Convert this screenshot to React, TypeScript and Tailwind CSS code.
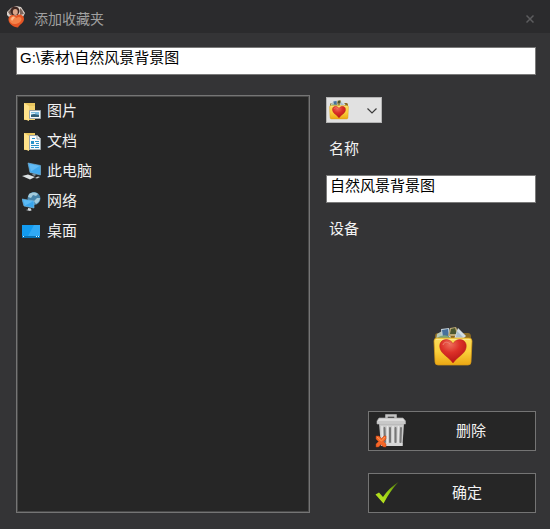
import { useState } from "react";
import type { ReactNode } from "react";

const FIELD_CLASS =
  "block h-7 w-full border border-[#7a7a7a] bg-white px-[3px] pb-[9px] text-[15px] leading-5 text-black outline-none";
const BUTTON_CLASS =
  "flex h-10 w-full items-center border border-[#747474] bg-[#262626] pl-1.5 text-[15px] leading-5 text-[#f2f2f2]";

function AppLogo() {
  return (
    <svg viewBox="0 0 20 22" className="h-[22px] w-5" aria-hidden>
      <path d="M1 6 5 2 10 0 15 1 19 7 17 11 5 13 1 9Z" fill="#dcd3cc" />
      <path d="M2 6 5 3 7 9 4 9ZM14 2 16 4 18 8 14 9Z" fill="#7d665c" />
      <circle cx="9" cy="5" r="4.500" fill="#402722" />
      <ellipse cx="9.300" cy="6" rx="2.500" ry="3" fill="#dba488" />
      <path d="M10 10C13 7 18 9 18 13c0 4-4 5-6 8.500C7 21 3 18 2.500 14 2 9 7 8 10 10Z" fill="#e65524" />
      <path d="M3.500 14c1-5 5-4 7-2 2-2 5-1 5 1 0 3-4 5-7 5-3 0-5-2-5-4Z" fill="#f58349" />
      <path d="M5 13c1-3 3-3 4-2l-3 4Z" fill="#ffb98c" />
    </svg>
  );
}

function FolderBase() {
  return (
    <>
      <path d="M2 2h11v17H2z" fill="#e9c65f" />
      <path d="M2 2l5 3v15l-5-2z" fill="#ffe28a" />
      <path d="M7 5h6v14H7z" fill="#f3d36f" />
    </>
  );
}

function PicturesIcon() {
  return (
    <svg viewBox="0 0 20 20" className="size-5" aria-hidden>
      <FolderBase />
      <path d="M7.500 9.500h11v8h-11z" fill="#f7fafb" stroke="#9aa5aa" />
      <path d="M9 11h8v5H9z" fill="#7bbbe0" />
      <path d="M9 14l3-1 5 1v2H9z" fill="#315f77" />
      <path d="M9 12h4v1H9z" fill="#d9eef7" />
    </svg>
  );
}

function DocumentsIcon() {
  return (
    <svg viewBox="0 0 20 20" className="size-5" aria-hidden>
      <FolderBase />
      <path d="M7.500 4.500h8l3 3v11h-11z" fill="#f8fbfc" stroke="#9aa5aa" />
      <path d="M15 5v3h3" fill="none" stroke="#9aa5aa" />
      <path d="M10 7h3v1h-3zM9 10h3v3H9zM13 10h4v1h-4zM14 12h3v1h-3zM9 14h8v1H9zM9 16h3v1H9zM13 16h4v1h-4z" fill="#2792c9" />
    </svg>
  );
}

function ComputerIcon() {
  return (
    <svg viewBox="0 0 20 20" className="size-5" aria-hidden>
      <path d="M6 2 18.500 4.500v9.500L8 11.500Z" fill="#41a9ee" stroke="#7fb9da" strokeWidth=".6" />
      <path d="M7 3 17.500 5 9 10.500Z" fill="#62bbf5" />
      <path d="M11 12.500l3 1-1 1.500-3-1Z" fill="#7b8e99" />
      <path d="M0 15l6-1.500 7 2.500-5 2.500Z" fill="#dce2e4" />
      <path d="M13 17l3-1.500 2 .5-3 1.500Z" fill="#cbd2d5" />
    </svg>
  );
}

function NetworkIcon() {
  return (
    <svg viewBox="0 0 20 20" className="size-5" aria-hidden>
      <circle cx="12" cy="7.500" r="6.500" fill="#4684aa" />
      <path d="M7 3c3-2 7-2 9 0l-2 2-3-1-2 3-3-1ZM15 7l3 0c0 3-2 5-4 6l-2-3Z" fill="#a3cbdc" />
      <path d="M0 8l12 2v7L2 15Z" fill="#3aa5ec" stroke="#7fc1e6" strokeWidth=".6" />
      <path d="M1 8.500l10 2L3 14.500Z" fill="#5cbaf4" />
      <path d="M6 17l3 .5v1l1 .5-2 1-4-1 2-.5Z" fill="#d4dade" />
    </svg>
  );
}

function DesktopIcon() {
  return (
    <svg viewBox="0 0 20 20" className="size-5" aria-hidden>
      <path d="M0 4h18v13H0z" fill="#129bf0" />
      <path d="M12 4h6v11H6z" fill="#30a9f5" />
      <path d="M0 15h18v2H0z" fill="#0872b4" />
      <path d="M1 15h1v1H1zM14 15h1v1h-1zM16 15h1v1h-1z" fill="#d9f1ff" />
    </svg>
  );
}

function FavoriteIcon({ className }: { className: string }) {
  return (
    <svg viewBox="0 0 40 40" className={className} aria-hidden>
      <defs>
        <linearGradient id="folder" x1="0" y1="0" x2="0" y2="1">
          <stop offset="0" stopColor="#f9dc5c" />
          <stop offset=".5" stopColor="#fbd03b" />
          <stop offset="1" stopColor="#eba714" />
        </linearGradient>
        <radialGradient id="heart" cx=".4" cy=".2" r=".8">
          <stop offset="0" stopColor="#ee6f5c" />
          <stop offset=".45" stopColor="#dc3028" />
          <stop offset="1" stopColor="#b51416" />
        </radialGradient>
      </defs>
      <path d="M2 9q0-3 3-3h30q3 0 3 4v8H2z" fill="#8a6a22" />
      <path d="M4 7l5-3 8 3v6H3z" fill="#b5c5b4" />
      <path d="M8 2l8-1 2 11H9z" fill="#c3d0da" />
      <path d="M9 3l6-1 1 8h-6z" fill="#47709b" />
      <path d="M17 1l6-1 4 9H15z" fill="#bba873" />
      <path d="M18 2l4-1 2 6h-7z" fill="#4b5730" />
      <path d="M25 1 33 9 30 12H21z" fill="#d3dee4" />
      <path d="M24 4l6 6h-7z" fill="#a9bfcc" />
      <path d="M4 11q5-4 11-2l4 3H5z" fill="#7da679" />
      <path d="M1 14q0-3 3-3h32q3 0 3 3l-1 21q0 3-3 3H5q-3 0-3-3z" fill="url(#folder)" stroke="#d99b15" strokeWidth=".7" />
      <path d="M3 12.500h34" stroke="#fbe98d" />
      <path d="M20 16.500C15 9 5 13 7 21c1 6 9 9 13 15 4-6 12-9 13-15 2-8-8-12-13-4.500Z" fill="url(#heart)" stroke="#bd1d19" strokeWidth=".5" />
      <path d="M10 18c1-3 4-4 7-1" fill="none" stroke="#ee8272" />
    </svg>
  );
}

function TrashIcon() {
  return (
    <svg viewBox="0 0 32 34" className="h-[34px] w-8" aria-hidden>
      <path d="M4 9h25l-1.500 23H6z" fill="#c9c9c9" />
      <path d="M9.500 14l.5 14M15 14v14M20.500 14v14M26 14l-.5 14" stroke="#777" strokeWidth="2" strokeLinecap="round" />
      <path d="M7 12l.5 17M12.500 12v17M18 12v17M23.500 12l-.5 17" stroke="#e6e6e6" strokeWidth="1.500" />
      <path d="M6 29h21.500v3H6z" fill="#d6d6d6" />
      <path d="M11.500 4V1.500h9V4" fill="none" stroke="#c4c4c4" strokeWidth="2.500" />
      <path d="M4 4h24l2.500 3v3H2V7z" fill="#dcdcdc" stroke="#a0a0a0" strokeWidth=".7" />
      <path d="M3 8h27" stroke="#b4b4b4" />
      <path d="M1 22h3l2.500 2.500L9 22h2v3l-2.500 2.500L11 30v3H8.500L6 30.500 3.500 33H1v-3l2.500-2.500L1 25z" fill="#f46728" stroke="#bd3e12" strokeWidth=".5" />
      <path d="M2 23l4.500 4L10 23" fill="none" stroke="#ff9a55" />
    </svg>
  );
}

function CheckIcon() {
  return (
    <svg viewBox="0 0 24 24" className="size-6" aria-hidden>
      <defs>
        <linearGradient id="check" x1="0" y1="1" x2="1" y2="0">
          <stop offset="0" stopColor="#c5ea24" />
          <stop offset=".55" stopColor="#96ce14" />
          <stop offset="1" stopColor="#456b0c" />
        </linearGradient>
      </defs>
      <path d="M.5 13.500 4 11.500 8 16Q14 7 23.500 1 15 10 8.500 22.500Z" fill="url(#check)" />
    </svg>
  );
}

const PLACES: { name: string; icon: ReactNode }[] = [
  { name: "图片", icon: <PicturesIcon /> },
  { name: "文档", icon: <DocumentsIcon /> },
  { name: "此电脑", icon: <ComputerIcon /> },
  { name: "网络", icon: <NetworkIcon /> },
  { name: "桌面", icon: <DesktopIcon /> },
];

export default function App() {
  const [path, setPath] = useState("G:\\素材\\自然风景背景图");
  const [name, setName] = useState("自然风景背景图");

  return (
    <div className="flex min-h-screen flex-col bg-[#343436] font-['Liberation_Sans','Noto_Sans_CJK_SC',sans-serif] text-[15px] text-[#f2f2f2]">
      <header className="flex h-[33px] items-center bg-[#2b2b2d] pr-3.5 pl-1.5">
        <AppLogo />
        <h1 className="ml-2 flex-1 pt-1 text-sm text-[#a0a0a0]">添加收藏夹</h1>
        <button type="button" aria-label="关闭" className="flex size-3 items-center justify-center pt-1 text-[#5c5c5e]">
          <svg viewBox="0 0 8 8" className="size-2" aria-hidden>
            <path d="M.5.5l7 7M7.500.5l-7 7" stroke="currentColor" strokeWidth="1.500" />
          </svg>
        </button>
      </header>

      <main className="flex flex-1 flex-col gap-5 pt-3.5 pr-3.5 pb-4 pl-4">
        <input aria-label="路径" value={path} onChange={(e) => setPath(e.target.value)} className={FIELD_CLASS} />

        <div className="flex flex-1 gap-4">
          <ul className="flex-1 border border-[#757575] bg-[#262626] inset-ring inset-ring-[#484848]">
            {PLACES.map((place) => (
              <li key={place.name}>
                <button
                  type="button"
                  onClick={() => setName(place.name)}
                  className="flex h-[30px] w-full items-center gap-[5px] pl-[5px] text-left leading-5"
                >
                  {place.icon}
                  {place.name}
                </button>
              </li>
            ))}
          </ul>

          <div className="flex w-[210px] flex-col pt-0.5">
            <div className="relative h-[26px] w-14">
              <select aria-label="图标" className="size-full appearance-none border border-[#b4b4b4] bg-[#e1e1e1] outline-none">
                <option value="favorite" />
              </select>
              <FavoriteIcon className="pointer-events-none absolute top-[3px] left-[3px] size-5" />
              <svg viewBox="0 0 10 6" className="pointer-events-none absolute top-[11px] right-[5px] h-1.5 w-2.5" aria-hidden>
                <path d="M.5.5 5 5 9.500.5" fill="none" stroke="#3c3c3c" strokeWidth="1.200" />
              </svg>
            </div>

            <label htmlFor="name" className="flex h-[52px] items-center pl-[3px]">
              名称
            </label>
            <input id="name" value={name} onChange={(e) => setName(e.target.value)} className={FIELD_CLASS} />
            <p className="flex h-[52px] items-center pl-[3px]">设备</p>

            <div className="flex flex-1 items-end justify-end pr-[63px] pb-11">
              <FavoriteIcon className="size-10" />
            </div>

            <div className="flex flex-col gap-[22px] pl-[42px]">
              <button type="button" className={BUTTON_CLASS}>
                <TrashIcon />
                <span className="flex-1">删除</span>
              </button>
              <button type="button" className={BUTTON_CLASS}>
                <CheckIcon />
                <span className="flex-1">确定</span>
              </button>
            </div>
          </div>
        </div>
      </main>
    </div>
  );
}
